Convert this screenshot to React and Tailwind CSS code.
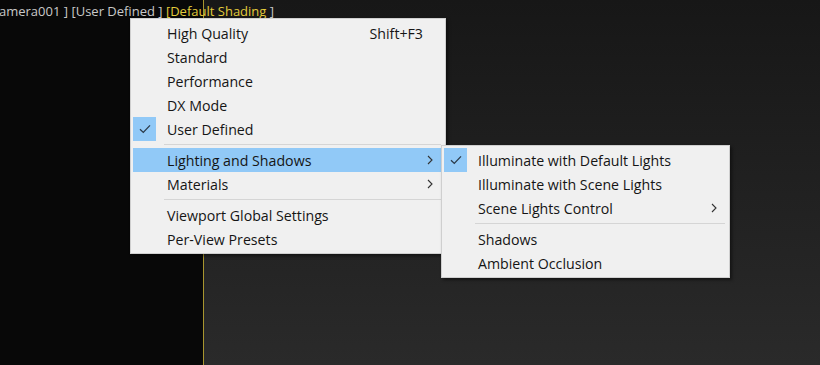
import React from "react";

const font = { fontFamily: '"Open Sans", "Noto Sans", sans-serif' };

const Check = () => (
  <svg width="12" height="10" viewBox="0 0 12 10" fill="none">
    <path d="M1 5.2 L4.3 8.4 L11 1.4" stroke="#2b3a48" strokeWidth="1.3" />
  </svg>
);

const Chevron = () => (
  <svg width="6" height="10" viewBox="0 0 6 10" fill="none">
    <path d="M1 1 L5 5 L1 9" stroke="#333" strokeWidth="1.1" />
  </svg>
);

const MenuItem = ({ label, shortcut, checked, sub, active }) => (
  <div className={`flex h-6 items-center ${active ? "bg-[#91c9f7]" : ""}`}>
    <div className={`flex h-6 w-[23px] items-center justify-center ${checked ? "bg-[#91c9f7]" : ""}`}>
      {checked && <Check />}
    </div>
    <span className="ml-[11px] flex-1 pt-px text-[14.2px] leading-[23px] text-[#151515]">{label}</span>
    {shortcut && <span className="mr-[20px] pt-px text-[14.2px] leading-[23px] text-[#151515]">{shortcut}</span>}
    {sub && (
      <span className="mr-[8px] flex w-[10px] justify-center">
        <Chevron />
      </span>
    )}
  </div>
);

const Separator = ({ left }) => (
  <div className="flex h-[7px] items-center">
    <div className={`${left} mr-[2px] h-px flex-1 bg-[#d5d5d5]`} />
  </div>
);

export default function App() {
  return (
    <div className="relative h-[365px] w-[820px] overflow-hidden" style={font}>
      <div className="flex h-full">
        <div className="w-[203px] bg-[#080808]" />
        <div className="w-px bg-[#a8952e]" />
        <div className="flex-1 bg-gradient-to-b from-[#171717] to-[#2a2a2a]" />
      </div>

      <div className="absolute left-[-1px] top-[1px] whitespace-nowrap text-[13px] leading-[20px] text-[#c8c8c8]">
        amera001 ] [User Defined ] <span className="text-[#e3cb3b]">[Default Shading</span> ]
      </div>

      <div className="absolute left-[130px] top-[18px] w-[316px] border border-[#cfcfcf] bg-[#f0f0f0] px-[2px] py-[2px] shadow-[2px_2px_3px_rgba(0,0,0,0.45)]">
        <MenuItem label="High Quality" shortcut="Shift+F3" />
        <MenuItem label="Standard" />
        <MenuItem label="Performance" />
        <MenuItem label="DX Mode" />
        <MenuItem label="User Defined" checked />
        <Separator left="ml-[31px]" />
        <MenuItem label="Lighting and Shadows" sub active />
        <MenuItem label="Materials" sub />
        <Separator left="ml-[31px]" />
        <MenuItem label="Viewport Global Settings" />
        <MenuItem label="Per-View Presets" />
      </div>

      <div className="absolute left-[441px] top-[145px] w-[289px] border border-[#cfcfcf] bg-[#f0f0f0] px-[2px] py-[2px] shadow-[2px_2px_3px_rgba(0,0,0,0.45)]">
        <MenuItem label="Illuminate with Default Lights" checked />
        <MenuItem label="Illuminate with Scene Lights" />
        <MenuItem label="Scene Lights Control" sub />
        <Separator left="ml-[31px]" />
        <MenuItem label="Shadows" />
        <MenuItem label="Ambient Occlusion" />
      </div>
    </div>
  );
}
